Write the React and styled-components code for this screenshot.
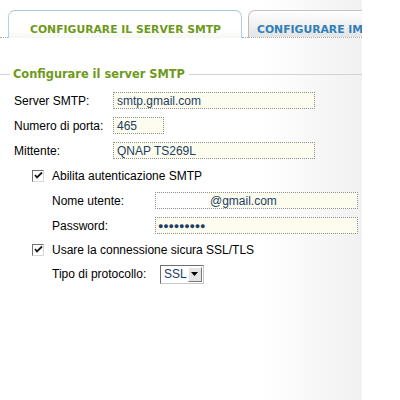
import React from "react";
import styled, { createGlobalStyle } from "styled-components";

const Global = createGlobalStyle`
  html, body { margin: 0; padding: 0; background: #fff; }
  body { font-family: "Liberation Sans", Arial, sans-serif; font-size: 12px; color: #000; }
`;

const Page = styled.div`
  width: 362px;
  height: 400px;
  background: linear-gradient(to right, #ffffff 0%, #ffffff 72%, #f1f1f1 100%);
`;

const TabBar = styled.div`
  display: flex;
  align-items: flex-end;
  padding-top: 10px;
  height: 28px;
  overflow: hidden;
`;

const TabGap = styled.div`
  width: ${(p) => p.$w}px;
  flex: none;
  align-self: stretch;
  border-bottom: 1px dotted #aaa;
  box-sizing: border-box;
`;

const Tab = styled.div`
  flex: none;
  box-sizing: border-box;
  height: 28px;
  width: ${(p) => p.$w}px;
  padding: 12px 0 0 ${(p) => p.$pl}px;
  border: 1px solid ${(p) => (p.$active ? "#b4cfe4" : "#bdbdbd")};
  border-top-color: ${(p) => (p.$active ? "#a7c7e2" : "#c4c4c4")};
  border-right-width: ${(p) => (p.$active ? 1 : 0)}px;
  border-bottom: ${(p) => (p.$active ? "none" : "1px dotted #aaa")};
  border-radius: ${(p) => (p.$active ? "7px 7px 0 0" : "7px 0 0 0")};
  background: ${(p) =>
    p.$active
      ? "linear-gradient(#ffffff 0%, #ffffff 70%, #f6f6f3 100%)"
      : "linear-gradient(#ffffff 0%, #f4f4f4 40%, #e4e4e4 100%)"};
  font-family: "DejaVu Sans", Verdana, sans-serif;
  font-weight: bold;
  font-size: 10.8px;
  white-space: nowrap;
  color: ${(p) => (p.$active ? "#6e9a1c" : "#2f80b9")};
`;

const Legend = styled.div`
  display: flex;
  align-items: center;
  height: 16px;
  margin-top: 28px;
`;

const LegendLine = styled.div`
  height: 1px;
  background: #d2d2d2;
  width: ${(p) => (p.$w ? `${p.$w}px` : "auto")};
  flex: ${(p) => (p.$w ? "none" : 1)};
`;

const LegendText = styled.span`
  padding: 0 4px 0 3px;
  font-family: "DejaVu Sans", Verdana, sans-serif;
  font-weight: bold;
  font-size: 11.4px;
  color: #6e9a1c;
  white-space: nowrap;
`;

const Form = styled.div`
  margin-top: 6px;
  display: flex;
  flex-direction: column;
`;

const Row = styled.div`
  display: flex;
  align-items: center;
  height: ${(p) => p.$h || 25}px;
  padding-left: ${(p) => p.$indent}px;
`;

const Label = styled.span`
  width: ${(p) => p.$w}px;
  flex: none;
  white-space: nowrap;
`;

const Field = styled.div`
  box-sizing: border-box;
  width: ${(p) => p.$w}px;
  height: 17px;
  border: 1px dotted #8f8f8f;
  background: #fcfcef;
  color: #1d3d63;
  padding-left: ${(p) => p.$pl || 3}px;
  display: flex;
  align-items: center;
  white-space: nowrap;
  overflow: hidden;
`;

const Redact = styled.span`
  width: 52px;
  height: 15px;
  background: #fff;
  flex: none;
  margin-left: -2px;
  margin-right: 2px;
`;

const Dots = styled.span`
  font-size: 9px;
  letter-spacing: -0.2px;
  color: #1d3d63;
`;

const CheckBox = styled.span`
  box-sizing: border-box;
  width: 12px;
  height: 12px;
  flex: none;
  border: 1px solid #707070;
  border-right-color: #d8d8d8;
  border-bottom-color: #d8d8d8;
  background: #fff;
  display: flex;
  align-items: center;
  justify-content: center;
  margin-right: 8px;
`;

const Select = styled.div`
  box-sizing: border-box;
  width: 44px;
  height: 19px;
  border: 1px solid #6f6f6f;
  border-right-color: #c8c8c8;
  border-bottom-color: #c8c8c8;
  background: #fff;
  display: flex;
  align-items: stretch;
  color: #1d3d63;
  font-size: 12px;
`;

const SelectValue = styled.span`
  flex: 1;
  padding-left: 3px;
  display: flex;
  align-items: center;
`;

const SelectButton = styled.span`
  width: 16px;
  box-sizing: border-box;
  margin: 1px;
  border: 1px solid #fff;
  border-right-color: #7a7a7a;
  border-bottom-color: #7a7a7a;
  background: #e4e4e4;
  display: flex;
  align-items: center;
  justify-content: center;
`;

const Check = () => (
  <svg width="9" height="9" viewBox="0 0 9 9">
    <path d="M1 4 L3 6.5 L8 1.5" fill="none" stroke="#1a1a1a" strokeWidth="1.8" />
  </svg>
);

export default function App() {
  return (
    <Page>
      <Global />
      <TabBar>
        <TabGap $w={8} />
        <Tab $active $w={234} $pl={21}>CONFIGURARE IL SERVER SMTP</Tab>
        <TabGap $w={6} />
        <Tab $w={114} $pl={8}>CONFIGURARE IM</Tab>
      </TabBar>
      <Legend>
        <LegendLine $w={10} />
        <LegendText>Configurare il server SMTP</LegendText>
        <LegendLine />
      </Legend>
      <Form>
        <Row $indent={14}>
          <Label $w={99}>Server SMTP:</Label>
          <Field $w={202}>smtp.gmail.com</Field>
        </Row>
        <Row $indent={14}>
          <Label $w={99}>Numero di porta:</Label>
          <Field $w={51}>465</Field>
        </Row>
        <Row $indent={14}>
          <Label $w={99}>Mittente:</Label>
          <Field $w={202}>QNAP TS269L</Field>
        </Row>
        <Row $indent={32}>
          <CheckBox><Check /></CheckBox>
          <span>Abilita autenticazione SMTP</span>
        </Row>
        <Row $indent={52}>
          <Label $w={103}>Nome utente:</Label>
          <Field $w={203} $pl={2}><Redact />@gmail.com</Field>
        </Row>
        <Row $indent={52}>
          <Label $w={103}>Password:</Label>
          <Field $w={203} $pl={2}><Dots>●●●●●●●●●</Dots></Field>
        </Row>
        <Row $indent={32} $h={23}>
          <CheckBox><Check /></CheckBox>
          <span>Usare la connessione sicura SSL/TLS</span>
        </Row>
        <Row $indent={52} $h={26}>
          <Label $w={108}>Tipo di protocollo:</Label>
          <Select>
            <SelectValue>SSL</SelectValue>
            <SelectButton>
              <svg width="7" height="4" viewBox="0 0 7 4"><path d="M0 0 H7 L3.5 4 Z" fill="#000" /></svg>
            </SelectButton>
          </Select>
        </Row>
      </Form>
    </Page>
  );
}
